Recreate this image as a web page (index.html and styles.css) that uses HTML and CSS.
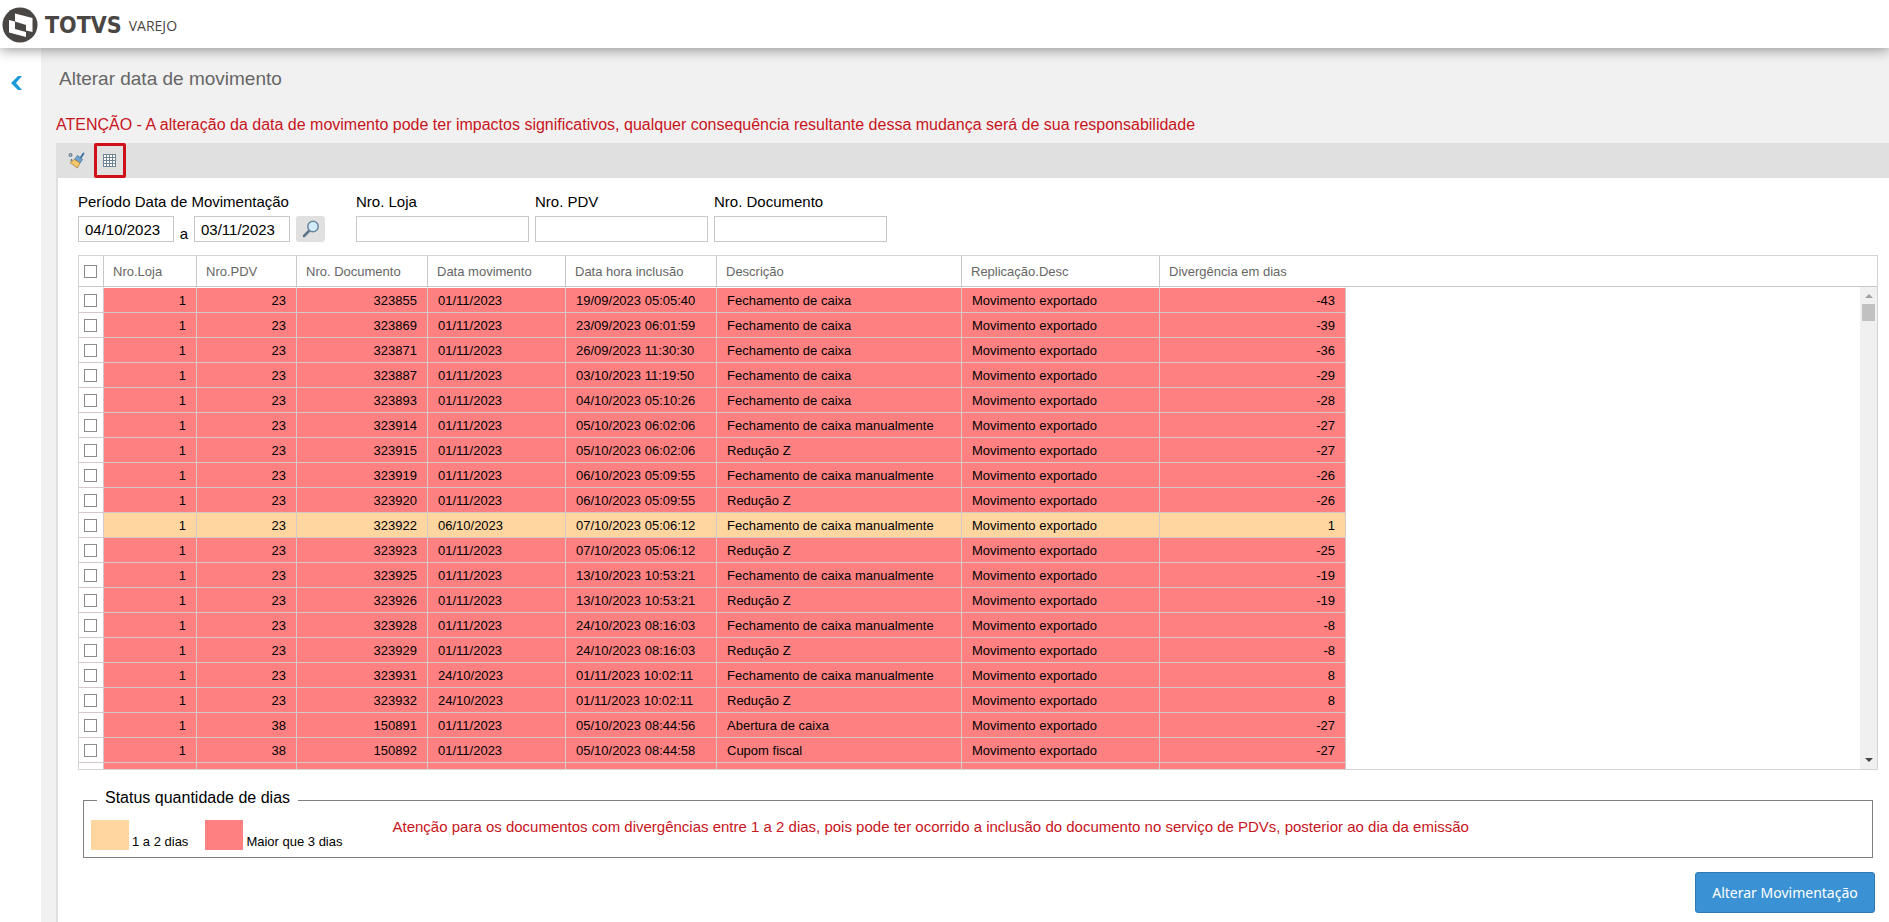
FILE: index.html
```html
<!DOCTYPE html>
<html lang="pt-BR">
<head>
    <meta charset="UTF-8">
    <meta name="viewport" content="width=device-width, initial-scale=1.0">
    <title>TOTVS Varejo - Alterar data de movimento</title>
    <link rel="stylesheet" href="styles.css">
</head>
<body>
    <header class="topbar">
        <svg class="logo" viewBox="0 0 36 36" width="36" height="36" aria-hidden="true">
            <circle cx="18" cy="18" r="17.5" fill="#4a4644"/>
            <path d="M13 6.500 L30.500 11 V25 L24 23.500 V30 L7 25.500 V13 L13 14.500 Z" fill="#fff"/>
            <path d="M13 14.500 L24 18 V25 L13 22 Z" fill="#4a4644"/>
        </svg>
        <span class="brand">TOTVS</span>
        <span class="product">VAREJO</span>
    </header>

    <div class="layout">
        <aside class="sidebar">
            <button class="collapse" aria-label="Recolher menu">
                <svg viewBox="0 0 12 14" width="12" height="14">
                    <path d="M7 0 H11 L5 7 L11 14 H7 L0 7 Z" fill="#1b9ad7"/>
                </svg>
            </button>
        </aside>

        <main class="content">
            <h1>Alterar data de movimento</h1>
            <p class="warning">ATENÇÃO - A alteração da data de movimento pode ter impactos significativos, qualquer consequência resultante dessa mudança será de sua responsabilidade</p>

            <section class="panel">
                <div class="toolbar">
                    <button class="tool" aria-label="Limpar">
                        <svg viewBox="0 0 17 17" width="17" height="17">
                            <circle cx="2.500" cy="3" r="1.500" fill="#aab4bb" stroke="#5c7486"/>
                            <circle cx="3.500" cy="8" r="0.900" fill="#5c7486"/>
                            <path d="M15.500 1.500 L12.500 6" stroke="#41719c" stroke-width="2" stroke-linecap="round"/>
                            <path d="M9.500 3.500 L14.500 7.500 L12 11 L6.500 7.500 Z" fill="#6fa3cf" stroke="#41719c" stroke-width="0.800"/>
                            <path d="M6.500 7.500 L12 11 L9.500 16 L2 10.500 Z" fill="#f5c76b" stroke="#a5803a" stroke-width="0.800"/>
                        </svg>
                    </button>
                    <button class="tool tool-marked" aria-label="Carregar grade">
                        <svg viewBox="0 0 14 13" width="14" height="13" shape-rendering="crispEdges">
                            <rect width="13" height="13" fill="#fff"/>
                            <path d="M0 .5H13M0 3.500H13M0 6.500H13M0 9.500H13M0 12.500H13M.5 0V13M3.500 0V13M6.500 0V13M9.500 0V13M12.500 0V13" stroke="#6f8593"/>
                        </svg>
                    </button>
                </div>

                <form class="filters">
                    <div class="field period">
                        <label for="data-inicio">Período Data de Movimentação</label>
                        <div class="period-row">
                            <input type="text" id="data-inicio" class="date" value="04/10/2023">
                            <label for="data-fim" class="until">a</label>
                            <input type="text" id="data-fim" class="date" value="03/11/2023">
                            <button type="button" class="search" aria-label="Pesquisar">
                                <svg viewBox="0 0 18 18" width="18" height="18">
                                    <path d="M2 16 L7 11" stroke="#5c7486" stroke-width="2.500" stroke-linecap="round"/>
                                    <circle cx="11" cy="6.500" r="5.200" fill="#d3ebfa" stroke="#6b87a0" stroke-width="1.500"/>
                                </svg>
                            </button>
                        </div>
                    </div>
                    <div class="field">
                        <label for="loja">Nro. Loja</label>
                        <input type="text" id="loja">
                    </div>
                    <div class="field">
                        <label for="pdv">Nro. PDV</label>
                        <input type="text" id="pdv">
                    </div>
                    <div class="field">
                        <label for="documento">Nro. Documento</label>
                        <input type="text" id="documento">
                    </div>
                </form>

                <div class="grid">
                    <div class="grid-view">
                        <table>
                            <colgroup>
                                <col class="c-check">
                                <col class="c-loja">
                                <col class="c-pdv">
                                <col class="c-doc">
                                <col class="c-data">
                                <col class="c-hora">
                                <col class="c-desc">
                                <col class="c-repl">
                                <col class="c-dias">
                                <col>
                            </colgroup>
                            <thead>
                                <tr>
                                    <th class="check"><input type="checkbox" aria-label="Selecionar todos"></th>
                                    <th>Nro.Loja</th>
                                    <th>Nro.PDV</th>
                                    <th>Nro. Documento</th>
                                    <th>Data movimento</th>
                                    <th>Data hora inclusão</th>
                                    <th>Descrição</th>
                                    <th>Replicação.Desc</th>
                                    <th class="last">Divergência em dias</th>
                                    <th class="last"></th>
                                </tr>
                            </thead>
                            <tbody id="rows"></tbody>
                        </table>
                    </div>
                    <div class="scrollbar" aria-hidden="true">
                        <span class="arrow-up"></span>
                        <span class="thumb"></span>
                        <span class="arrow-down"></span>
                    </div>
                </div>

                <fieldset class="legend-box">
                    <legend>Status quantidade de dias</legend>
                    <div class="legend-row">
                        <span class="swatch low"></span>
                        <span class="swatch-text">1 a 2 dias</span>
                        <span class="swatch high"></span>
                        <span class="swatch-text">Maior que 3 dias</span>
                        <p class="note">Atenção para os documentos com divergências entre 1 a 2 dias, pois pode ter ocorrido a inclusão do documento no serviço de PDVs, posterior ao dia da emissão</p>
                    </div>
                </fieldset>

                <div class="actions">
                    <button class="primary">Alterar Movimentação</button>
                </div>
            </section>
        </main>
    </div>

    <script src="script.js"></script>
</body>
</html>
```

FILE: styles.css
```css
* {
    box-sizing: border-box;
}
body {
    margin: 0;
    min-height: 100vh;
    display: flex;
    flex-direction: column;
    font-family: "Liberation Sans", Arial, sans-serif;
    font-size: 15px;
    color: #000;
    background-color: #f1f1f1;
}
button {
    padding: 0;
    border: none;
    background: none;
    cursor: pointer;
}
svg {
    display: block;
}
.topbar {
    position: relative;
    display: flex;
    align-items: center;
    height: 48px;
    padding: 2px 0 0 2px;
    background-color: #fff;
    color: #4a4644;
    box-shadow: 0 2px 12px rgba(0,0,0,0.4);
}
.brand {
    margin-left: 7px;
    font-family: "DejaVu Sans Condensed", "DejaVu Sans", sans-serif;
    font-size: 23px;
    font-weight: bold;
}
.product {
    margin-left: 7px;
    font-family: "Open Sans", sans-serif;
    font-size: 14px;
}
.layout {
    display: flex;
    flex: 1;
}
.sidebar {
    width: 41px;
    padding: 28px 0 0 11px;
    background-color: #fff;
}
.content {
    flex: 1;
    min-width: 0;
    display: flex;
    flex-direction: column;
    padding-left: 15px;
}
h1 {
    margin: 20px 0 0 3px;
    font-size: 19px;
    line-height: 22px;
    font-weight: normal;
    color: #666;
}
.warning {
    margin: 26px 0 0;
    font-size: 16px;
    line-height: 18px;
    color: #c8141c;
}
.panel {
    flex: 1;
    margin-top: 9px;
    border-left: 2px solid #e0e0e0;
    background-color: #fff;
}
.toolbar {
    display: flex;
    align-items: center;
    gap: 5px;
    height: 35px;
    padding-left: 5px;
    background-color: #e0e0e0;
}
.tool {
    display: flex;
    align-items: center;
    justify-content: center;
    width: 26px;
    height: 35px;
}
.tool-marked {
    width: 32px;
    border: 3px solid #d01018;
    border-radius: 2px;
}
.filters {
    display: flex;
    gap: 6px;
    padding: 15px 20px 0;
}
.field {
    width: 173px;
}
.field label {
    display: block;
    line-height: 17px;
}
.field input {
    display: block;
    width: 100%;
    height: 26px;
    margin-top: 6px;
    padding: 0 6px;
    border: 1px solid #c8c8c8;
    font: inherit;
}
.period {
    width: 272px;
}
.period-row {
    display: flex;
}
.period-row .date {
    width: 96px;
}
.period-row .until {
    width: 20px;
    padding-top: 15px;
    text-align: center;
}
.search {
    display: flex;
    align-items: center;
    justify-content: center;
    width: 29px;
    height: 26px;
    margin: 6px 0 0 6px;
    border-radius: 3px;
    background-color: #e0e0e0;
}
.grid {
    position: relative;
    margin: 13px 11px 0 20px;
    border: 1px solid #d4d4d4;
}
.grid-view {
    height: 513px;
    overflow: hidden;
}
table {
    width: 100%;
    table-layout: fixed;
    border-collapse: separate;
    border-spacing: 0;
    font-size: 13px;
}
.c-check {
    width: 25px;
}
.c-loja {
    width: 93px;
}
.c-pdv {
    width: 100px;
}
.c-doc {
    width: 131px;
}
.c-data {
    width: 138px;
}
.c-hora {
    width: 151px;
}
.c-desc {
    width: 245px;
}
.c-repl {
    width: 198px;
}
.c-dias {
    width: 186px;
}
th {
    height: 31px;
    padding: 0 9px;
    border-right: 1px solid #c8c8c8;
    border-bottom: 1px solid #c8c8c8;
    font-weight: normal;
    text-align: left;
    color: #666;
}
th.last {
    border-right: none;
}
td {
    height: 25px;
    padding: 0 10px;
    border-right: 1px solid #d4c8c8;
    border-bottom: 1px solid #d4c8c8;
    background-color: #ff8080;
}
tbody tr:first-child td {
    height: 26px;
    border-top: 1px solid #fff;
}
.low td {
    background-color: #ffd5a0;
}
td.num {
    text-align: right;
}
td.check, th.check {
    padding: 0 0 0 5px;
    background-color: #fff;
}
td.blank {
    border: none;
    background: none;
}
.check input {
    display: block;
    appearance: none;
    width: 13px;
    height: 13px;
    margin: 0;
    border: 1px solid #8c8c8c;
    background-color: #fff;
}
.scrollbar {
    position: absolute;
    top: 31px;
    right: 0;
    bottom: 0;
    width: 17px;
    display: flex;
    flex-direction: column;
    align-items: center;
    padding: 7px 0;
    background-color: #f0f0f0;
}
.arrow-up, .arrow-down {
    border: 4px solid transparent;
    border-top: none;
    border-bottom-color: #a0a0a0;
}
.arrow-down {
    margin-top: auto;
    border-top: 4px solid #444;
    border-bottom: none;
}
.thumb {
    width: 13px;
    height: 17px;
    margin-top: 6px;
    background-color: #c1c1c1;
}
.legend-box {
    min-width: 0;
    margin: 19px 16px 0 25px;
    padding: 0 7px 7px;
    border: 1px solid #808080;
}
.legend-box legend {
    margin-left: 6px;
    padding: 0 8px 5px;
    font-size: 16px;
    line-height: 18px;
}
.legend-row {
    display: flex;
    align-items: flex-end;
    height: 38px;
}
.swatch {
    width: 38px;
    height: 30px;
    margin-right: 3px;
}
.swatch.low {
    background-color: #ffd5a0;
}
.swatch.high {
    margin-left: 17px;
    background-color: #ff8080;
}
.swatch-text {
    font-size: 13px;
    line-height: 17px;
}
.note {
    align-self: flex-start;
    margin: 6px 0 0 50px;
    line-height: 17px;
    color: #c8141c;
}
.actions {
    display: flex;
    justify-content: flex-end;
    padding: 14px 14px 9px 0;
}
.primary {
    width: 180px;
    height: 41px;
    border: 1px solid #2f79b0;
    border-radius: 3px;
    background-color: #3a92d4;
    font-family: "Noto Sans", sans-serif;
    font-size: 14px;
    color: #fff;
}
```

FILE: script.js
```js
const descricoes = {
    FC: 'Fechamento de caixa',
    FM: 'Fechamento de caixa manualmente',
    RZ: 'Redução Z',
    AC: 'Abertura de caixa',
    CF: 'Cupom fiscal'
};

// loja, pdv, documento, data movimento, data hora inclusão, descrição, dias
const movimentos = [
    [1, 23, 323855, '01/11/2023', '19/09/2023 05:05:40', 'FC', -43],
    [1, 23, 323869, '01/11/2023', '23/09/2023 06:01:59', 'FC', -39],
    [1, 23, 323871, '01/11/2023', '26/09/2023 11:30:30', 'FC', -36],
    [1, 23, 323887, '01/11/2023', '03/10/2023 11:19:50', 'FC', -29],
    [1, 23, 323893, '01/11/2023', '04/10/2023 05:10:26', 'FC', -28],
    [1, 23, 323914, '01/11/2023', '05/10/2023 06:02:06', 'FM', -27],
    [1, 23, 323915, '01/11/2023', '05/10/2023 06:02:06', 'RZ', -27],
    [1, 23, 323919, '01/11/2023', '06/10/2023 05:09:55', 'FM', -26],
    [1, 23, 323920, '01/11/2023', '06/10/2023 05:09:55', 'RZ', -26],
    [1, 23, 323922, '06/10/2023', '07/10/2023 05:06:12', 'FM', 1],
    [1, 23, 323923, '01/11/2023', '07/10/2023 05:06:12', 'RZ', -25],
    [1, 23, 323925, '01/11/2023', '13/10/2023 10:53:21', 'FM', -19],
    [1, 23, 323926, '01/11/2023', '13/10/2023 10:53:21', 'RZ', -19],
    [1, 23, 323928, '01/11/2023', '24/10/2023 08:16:03', 'FM', -8],
    [1, 23, 323929, '01/11/2023', '24/10/2023 08:16:03', 'RZ', -8],
    [1, 23, 323931, '24/10/2023', '01/11/2023 10:02:11', 'FM', 8],
    [1, 23, 323932, '24/10/2023', '01/11/2023 10:02:11', 'RZ', 8],
    [1, 38, 150891, '01/11/2023', '05/10/2023 08:44:56', 'AC', -27],
    [1, 38, 150892, '01/11/2023', '05/10/2023 08:44:58', 'CF', -27]
];

const tbody = document.getElementById('rows');

function addCell(tr, text, className) {
    const td = tr.insertCell();
    td.textContent = text;
    if (className) td.className = className;
    return td;
}

function addRow(m) {
    const tr = tbody.insertRow();
    const check = addCell(tr, '', 'check');
    // a última linha fica cortada pela altura da grade
    if (!m) {
        for (let i = 0; i < 8; i++) addCell(tr, '');
        addCell(tr, '', 'blank');
        return;
    }
    if (Math.abs(m[6]) <= 2) tr.className = 'low';
    const box = document.createElement('input');
    box.type = 'checkbox';
    box.setAttribute('aria-label', 'Selecionar documento ' + m[2]);
    check.appendChild(box);
    addCell(tr, m[0], 'num');
    addCell(tr, m[1], 'num');
    addCell(tr, m[2], 'num');
    addCell(tr, m[3]);
    addCell(tr, m[4]);
    addCell(tr, descricoes[m[5]]);
    addCell(tr, 'Movimento exportado');
    addCell(tr, m[6], 'num');
    addCell(tr, '', 'blank');
}

movimentos.forEach(addRow);
addRow(null);
```
